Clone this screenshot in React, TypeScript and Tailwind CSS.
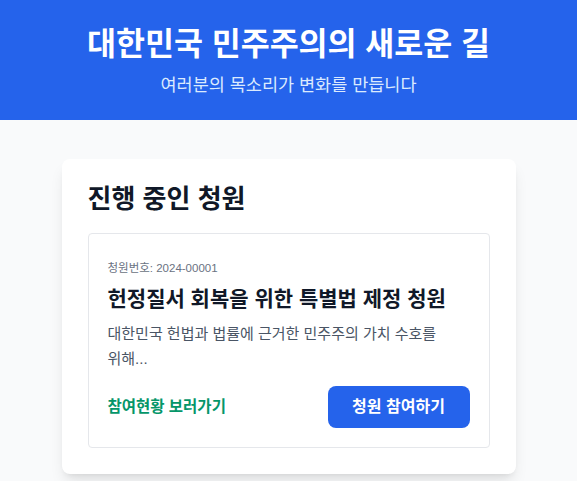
export default function App() {
  return (
    <div className="min-h-screen bg-gray-50 font-['Liberation_Sans','Noto_Sans_CJK_KR',sans-serif]">
      <header className="bg-[#2563eb] text-white text-center h-[120px] pt-[26px]">
        <h1 className="text-[31.5px] font-bold leading-9">대한민국 민주주의의 새로운 길</h1>
        <p className="text-[17.5px] leading-6 mt-[11px] text-blue-100">여러분의 목소리가 변화를 만듭니다</p>
      </header>

      <main className="flex justify-center pt-[39px]">
        <section className="w-[454px] bg-white rounded-lg shadow-lg px-[26px] pt-6 pb-[26px]">
          <h2 className="text-[26px] font-bold text-gray-900 leading-8 mb-[18px]">진행 중인 청원</h2>

          <div className="border border-gray-200 rounded px-[19px] pt-5 pb-[19px]">
            <p className="text-[11.5px] leading-4 text-gray-500 mt-1.5">청원번호: 2024-00001</p>
            <h3 className="text-[21px] font-bold leading-7 text-gray-900 mt-[9px]">
              헌정질서 회복을 위한 특별법 제정 청원
            </h3>
            <p className="text-[15px] text-gray-600 leading-[25px] mt-2 break-keep">
              대한민국 헌법과 법률에 근거한 민주주의 가치 수호를 위해...
            </p>
            <div className="flex items-center justify-between mt-[15px]">
              <a className="text-[15.5px] font-bold text-[#059669] cursor-pointer">참여현황 보러가기</a>
              <button className="bg-[#2563eb] text-white text-base font-bold rounded-lg w-[142px] h-[42px]">
                청원 참여하기
              </button>
            </div>
          </div>
        </section>
      </main>
    </div>
  )
}
